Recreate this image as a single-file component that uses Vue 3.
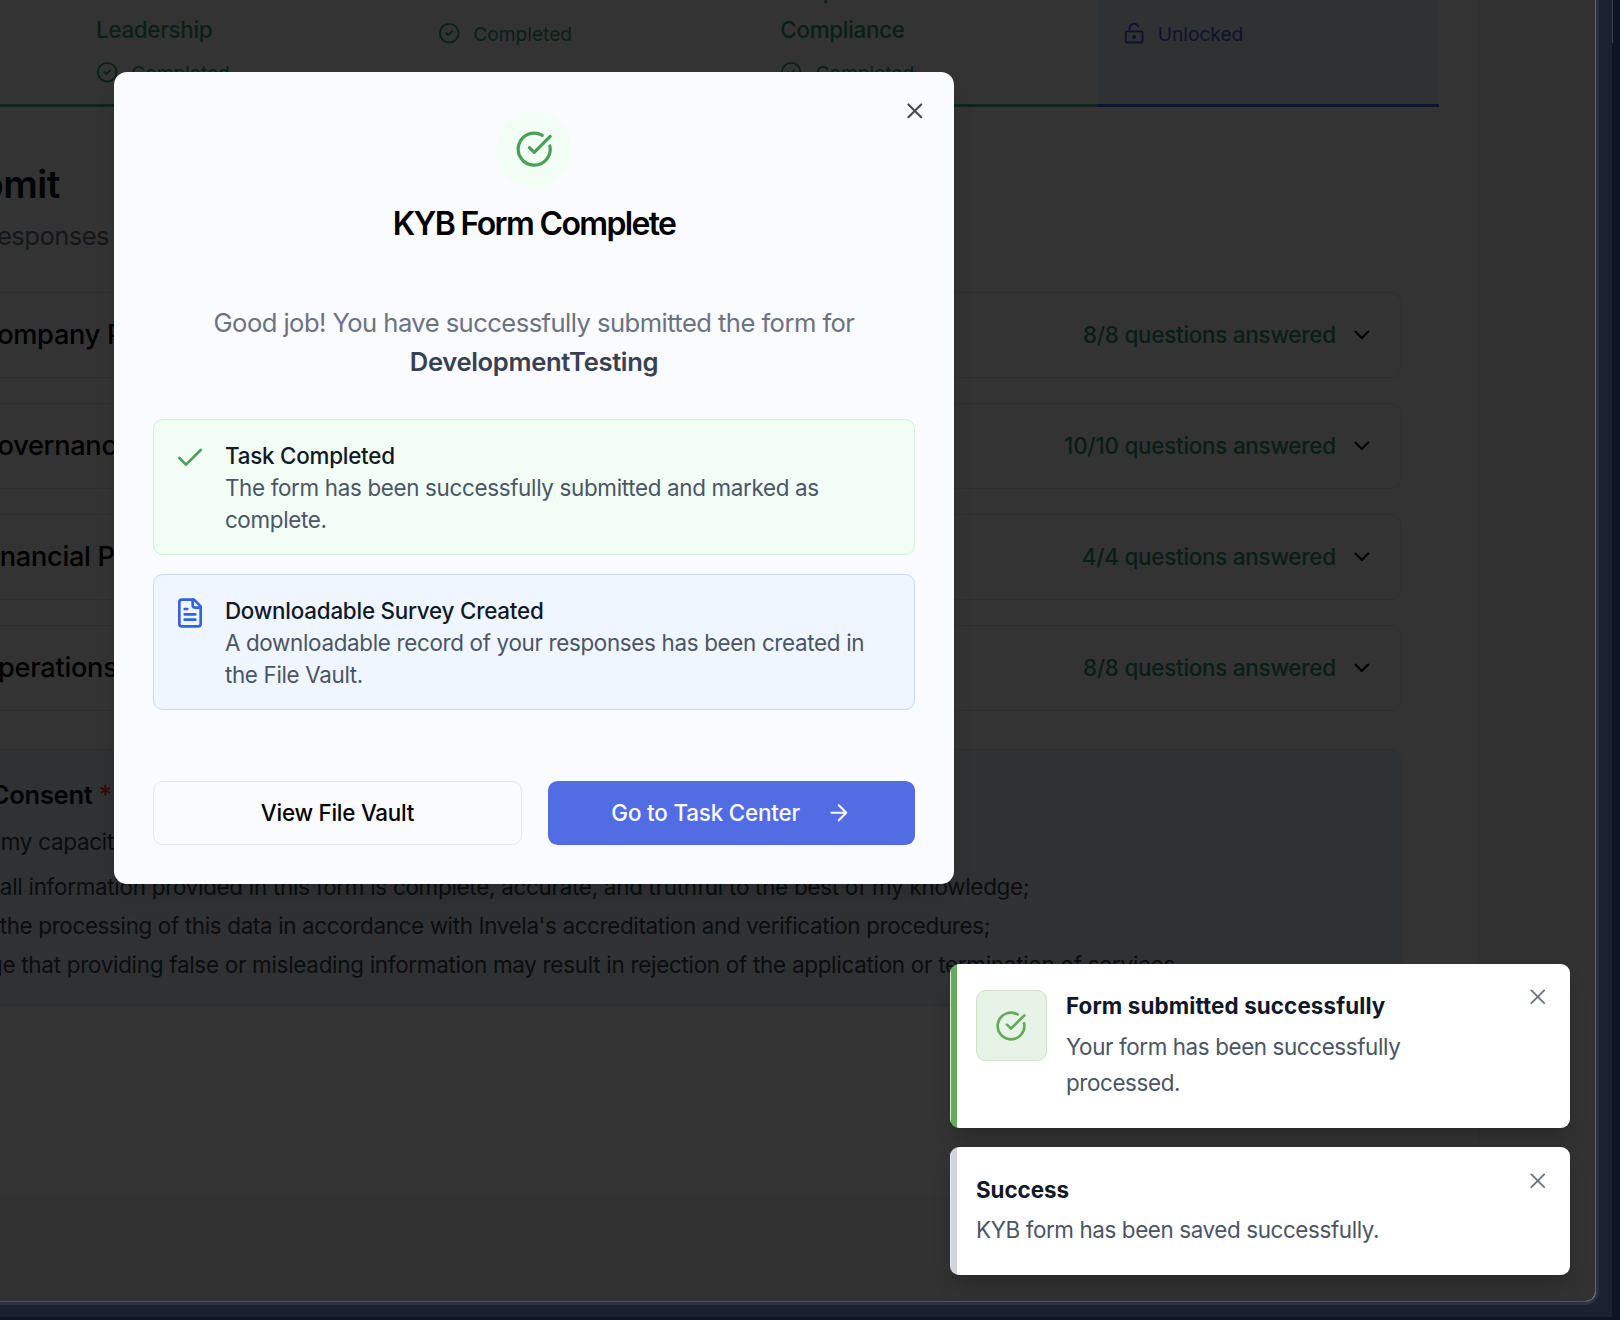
<script setup>
const tabs = [
  { name: ['2. Governance &', 'Leadership'], status: 'Completed', open: false },
  { name: ['3. Financial Profile'], status: 'Completed', open: false },
  { name: ['4. Operations &', 'Compliance'], status: 'Completed', open: false },
  { name: ['5. Review & Submit'], status: 'Unlocked', open: true },
]

const sections = [
  { title: 'Company Profile', answered: '8/8 questions answered' },
  { title: 'Governance & Leadership', answered: '10/10 questions answered' },
  { title: 'Financial Profile', answered: '4/4 questions answered' },
  { title: 'Operations & Compliance', answered: '8/8 questions answered' },
]
</script>

<template>
  <div class="desktop">
    <div class="backdrop">
      <div class="window">
        <div class="viewport">
          <main class="page">
            <nav class="tabs">
              <div class="tab tab-first"></div>
              <div v-for="t in tabs" :key="t.name[0]" class="tab" :class="{ active: t.open }">
                <div v-for="line in t.name" :key="line" class="tab-name">{{ line }}</div>
                <div class="tab-status">
                  <svg v-if="t.open" class="icon" viewBox="0 0 24 24">
                    <circle cx="12" cy="16" r="1" />
                    <rect width="18" height="12" x="3" y="10" rx="2" />
                    <path d="M7 10V7a5 5 0 0 1 9.33-2.5" />
                  </svg>
                  <svg v-else class="icon" viewBox="0 0 24 24">
                    <circle cx="12" cy="12" r="10" />
                    <path d="m9 12 2 2 4-4" />
                  </svg>
                  <span>{{ t.status }}</span>
                </div>
              </div>
            </nav>

            <h1 class="heading">Review &amp; Submit</h1>
            <p class="lead">Please review your responses</p>

            <div class="sections">
              <div v-for="s in sections" :key="s.title" class="section">
                <div class="section-title">{{ s.title }}</div>
                <div class="section-side">
                  <span>{{ s.answered }}</span>
                  <svg class="icon chevron" viewBox="0 0 24 24"><path d="m6 9 6 6 6-6" /></svg>
                </div>
              </div>
            </div>

            <div class="consent">
              <div class="consent-title">Submission Consent <span class="star">*</span></div>
              <p class="capacity">In my capacity as an authorized</p>
              <p class="line l1">I certify that all information provided in this form is complete, accurate, and truthful to the best of my knowledge;</p>
              <p class="line l2">I consent to the processing of this data in accordance with Invela's accreditation and verification procedures;</p>
              <p class="line l3">I acknowledge that providing false or misleading information may result in rejection of the application or termination of services.</p>
            </div>
          </main>
          <div class="overlay"></div>
        </div>
      </div>
    </div>
    <div class="edge-mark"></div>

    <div class="dialog" role="dialog">
      <button class="dialog-close" aria-label="Close">
        <svg class="icon" viewBox="0 0 24 24"><path d="M18 6 6 18M6 6l12 12" /></svg>
      </button>
      <div class="badge">
        <svg class="icon" viewBox="0 0 24 24">
          <path d="M21.801 10A10 10 0 1 1 17 3.335" />
          <path d="m9 11 3 3L22 4" />
        </svg>
      </div>
      <h2 class="dialog-title">KYB Form Complete</h2>
      <p class="dialog-text">
        <span class="good">Good job! You have successfully submitted the form for</span><br />
        <strong>DevelopmentTesting</strong>
      </p>

      <div class="note green">
        <svg class="icon" viewBox="0 0 24 24"><path d="M20 6 9 17l-5-5" /></svg>
        <div class="note-body">
          <div class="note-title">Task Completed</div>
          <div>The form has been successfully submitted and marked as<br />complete.</div>
        </div>
      </div>

      <div class="note blue">
        <svg class="icon" viewBox="0 0 24 24">
          <path d="M15 2H6a2 2 0 0 0-2 2v16a2 2 0 0 0 2 2h12a2 2 0 0 0 2-2V7Z" />
          <path d="M14 2v4a2 2 0 0 0 2 2h4" />
          <path d="M10 9H8M16 13H8M16 17H8" />
        </svg>
        <div class="note-body">
          <div class="note-title">Downloadable Survey Created</div>
          <div>A downloadable record of your responses has been created in<br />the File Vault.</div>
        </div>
      </div>

      <div class="actions">
        <button class="btn outline">View File Vault</button>
        <button class="btn primary">
          <span>Go to Task Center</span>
          <svg class="icon" viewBox="0 0 24 24"><path d="M5 12h14M12 5l7 7-7 7" /></svg>
        </button>
      </div>
    </div>

    <div class="toasts">
      <div class="toast success">
        <div class="toast-icon">
          <svg class="icon" viewBox="0 0 24 24">
            <path d="M21.801 10A10 10 0 1 1 17 3.335" />
            <path d="m9 11 3 3L22 4" />
          </svg>
        </div>
        <div class="toast-body">
          <div class="toast-title">Form submitted successfully</div>
          <div class="toast-text">Your form has been successfully<br />processed.</div>
        </div>
        <svg class="icon toast-close" viewBox="0 0 24 24"><path d="M18 6 6 18M6 6l12 12" /></svg>
      </div>
      <div class="toast plain">
        <div class="toast-body">
          <div class="toast-title">Success</div>
          <div class="toast-text">KYB form has been saved successfully.</div>
        </div>
        <svg class="icon toast-close" viewBox="0 0 24 24"><path d="M18 6 6 18M6 6l12 12" /></svg>
      </div>
    </div>
  </div>
</template>

<style>
body {
  margin: 0;
  background: #0d1424;
}
</style>

<style scoped>
* {
  box-sizing: border-box;
}
.desktop {
  position: relative;
  width: 1620px;
  height: 1320px;
  overflow: hidden;
  background: #0e1424;
  font-family: Inter, 'Liberation Sans', sans-serif;
  font-size: 22.4px;
  white-space: nowrap;
}
h1,
h2,
p {
  margin: 0;
}
button {
  font: inherit;
  letter-spacing: inherit;
  padding: 0;
  border: 0;
  background: none;
}
.icon {
  flex: none;
  display: block;
  fill: none;
  stroke: currentColor;
  stroke-width: 2;
  stroke-linecap: round;
  stroke-linejoin: round;
}
.backdrop {
  width: 1612px;
  height: 1317px;
  background: #1b2131;
}
.window {
  width: 1599px;
  height: 1305px;
  border-bottom-right-radius: 14px;
  background: #2b3047;
}
.viewport {
  position: relative;
  width: 1596px;
  height: 1302px;
  overflow: hidden;
  border-right: 1px solid #65666d;
  border-bottom: 1px solid #55565c;
  border-bottom-right-radius: 10px;
  background: #f7f7f7;
}
.overlay {
  position: absolute;
  inset: 0;
  background: rgba(0, 0, 0, 0.8);
}
.edge-mark {
  position: absolute;
  left: 1612px;
  top: 0;
  width: 1px;
  height: 43px;
  background: #3a4257;
}
.page {
  width: 1479px;
  height: 1199px;
  overflow: hidden;
  border-right: 1px solid #efefef;
  border-bottom: 1px solid #efefef;
  background: #fdfdfd;
}

.tabs {
  display: flex;
  height: 135.7px;
  margin-top: -28.7px;
}
.tab {
  width: 342.2px;
  padding: 0.9px 0 0 25.8px;
  border-bottom: 3px solid #54b08f;
  color: #2f9e75;
}
.tab-first {
  width: 70.2px;
  padding: 0;
}
.tab.active {
  background: #ecf2fa;
  border-color: #5564ea;
  color: #4c5ce6;
}
.tab-name {
  height: 38.4px;
  line-height: 38.4px;
  font-weight: 500;
  letter-spacing: -0.3px;
}
.tab-status {
  display: flex;
  align-items: center;
  gap: 12.8px;
  height: 22.4px;
  margin-top: 11.9px;
  font-size: 19.2px;
}
.tab-status span {
  padding-top: 1px;
  letter-spacing: -0.03px;
}
.tab-status .icon {
  width: 22.4px;
  height: 22.4px;
}
.tab.active .icon {
  margin: 0 -0.7px 0 0.7px;
}

.heading {
  margin: 53.4px 0 0 -241.5px;
  font-size: 38.4px;
  line-height: 48px;
  font-weight: 600;
  letter-spacing: -0.5px;
  color: #0f172a;
}
.lead {
  margin: 7.6px 0 0 -237px;
  font-size: 25.6px;
  line-height: 40px;
  letter-spacing: -0.55px;
  color: #6b7280;
}
.sections {
  display: flex;
  flex-direction: column;
  gap: 25.4px;
  width: 1401px;
  margin-top: 36px;
}
.section {
  display: flex;
  align-items: center;
  justify-content: space-between;
  height: 85.6px;
  padding-right: 25.8px;
  border: 1px solid #e7e7e9;
  border-left: 0;
  border-radius: 0 10px 10px 0;
}
.section-title {
  margin-left: -22.5px;
  font-size: 27.2px;
  font-weight: 500;
  letter-spacing: -0.3px;
  color: #000;
}
.section-side {
  display: flex;
  align-items: center;
  gap: 12.8px;
  font-weight: 500;
  letter-spacing: -0.235px;
  color: #2f9470;
}
.chevron {
  width: 25.6px;
  height: 25.6px;
  color: #000;
}
.consent {
  width: 1401px;
  height: 257px;
  margin-top: 38px;
  padding-top: 26px;
  overflow: hidden;
  border: 1px solid #e2e6ec;
  border-left: 0;
  border-radius: 0 10px 10px 0;
  background: #eff3f8;
  color: #374151;
}
.consent-title {
  margin-left: -156px;
  line-height: 38px;
  font-size: 25.6px;
  font-weight: 600;
  letter-spacing: -0.34px;
  color: #111827;
}
.star {
  color: #ef4444;
}
.capacity {
  margin: 9.6px 0 0 -24px;
  line-height: 38.5px;
  letter-spacing: -0.26px;
}
.line {
  line-height: 38.6px;
  letter-spacing: -0.265px;
}
.l1 {
  margin: 6.8px 0 0 -129.8px;
}
.l2 {
  margin-left: -126.2px;
  letter-spacing: -0.34px;
}
.l3 {
  margin-left: -134.8px;
}

.dialog {
  position: absolute;
  left: 114px;
  top: 72px;
  width: 840px;
  height: 812px;
  padding: 39px 39px 0;
  border-radius: 13px;
  background: #fafbff;
  box-shadow: 0 16px 24px -5px rgba(0, 0, 0, 0.12);
}
.dialog-close {
  position: absolute;
  top: 26.4px;
  right: 26.6px;
  color: #4a4b4f;
}
.dialog-close .icon {
  width: 25.6px;
  height: 25.6px;
}
.badge {
  display: flex;
  align-items: center;
  justify-content: center;
  width: 76.8px;
  height: 76.8px;
  margin: 0 auto;
  border-radius: 50%;
  background: #f1fdf5;
  color: #48a154;
}
.badge .icon {
  width: 38.4px;
  height: 38.4px;
}
.dialog-title {
  margin-top: 20.2px;
  text-align: center;
  font-size: 32px;
  line-height: 32px;
  font-weight: 600;
  letter-spacing: -1.65px;
  color: #000;
}
.dialog-text {
  margin-top: 63px;
  text-align: center;
  font-size: 25.6px;
  line-height: 39px;
  color: #6b7280;
}
.good {
  letter-spacing: -0.555px;
}
.dialog-text strong {
  font-weight: 600;
  letter-spacing: -0.34px;
  color: #374151;
}
.note {
  display: flex;
  height: 136px;
  padding: 19px 19.5px;
  border: 1px solid;
  border-radius: 9.6px;
}
.note .icon {
  width: 32px;
  height: 32px;
  margin-top: 3px;
}
.note-body {
  margin-left: 19.4px;
  padding-top: 0.6px;
  line-height: 32px;
  letter-spacing: -0.325px;
  color: #4b5563;
}
.note-title {
  font-weight: 500;
  letter-spacing: -0.225px;
  color: #111827;
}
.green {
  margin-top: 38px;
  border-color: #c8f4d5;
  background: #f2fdf5;
}
.green .icon {
  color: #48a154;
}
.blue {
  margin-top: 19px;
  border-color: #c3dafc;
  background: #eff6ff;
}
.blue .icon {
  color: #3562e5;
}
.actions {
  display: flex;
  gap: 26px;
  margin-top: 71px;
}
.btn {
  display: flex;
  align-items: center;
  justify-content: center;
  gap: 26px;
  height: 64px;
  border-radius: 9.6px;
  font-weight: 500;
  letter-spacing: -0.24px;
}
.outline {
  width: 369px;
  border: 1px solid #e4e7ec;
  color: #000;
}
.primary {
  width: 367px;
  background: #526ce4;
  color: #fafbff;
  letter-spacing: -0.17px;
}
.primary .icon {
  width: 25.6px;
  height: 25.6px;
}

.toasts {
  position: absolute;
  left: 950px;
  top: 964px;
  display: flex;
  flex-direction: column;
  gap: 19px;
  width: 620px;
}
.toast {
  position: relative;
  display: flex;
  gap: 19px;
  border-radius: 9px;
  box-shadow: 0 12px 20px -4px rgba(0, 0, 0, 0.22);
}
.success {
  height: 164px;
  padding: 26px 0 0 26px;
  background: linear-gradient(90deg, #dfe8df 1px, #66ad5b 1px, #66ad5b 7px, #fff 7px);
}
.plain {
  height: 128px;
  padding: 27.3px 0 0 26px;
  background: linear-gradient(90deg, #ebecee 1px, #d1d5db 1px, #d1d5db 7px, #fff 7px);
}
.toast-icon {
  display: flex;
  align-items: center;
  justify-content: center;
  width: 71px;
  height: 71px;
  padding-right: 1.4px;
  border: 1px solid #c9e5c8;
  border-radius: 9.6px;
  background: #e8f3e8;
  color: #62ab58;
}
.toast-icon .icon {
  width: 32px;
  height: 32px;
}
.toast-title {
  line-height: 32px;
  font-weight: 700;
  letter-spacing: -0.05px;
  color: #111827;
}
.success .toast-title {
  letter-spacing: 0.11px;
}
.toast-text {
  margin-top: 7px;
  line-height: 36.4px;
  letter-spacing: -0.385px;
  color: #4b5563;
}
.plain .toast-text {
  margin-top: 6px;
}
.toast-close {
  position: absolute;
  top: 19.8px;
  right: 19.8px;
  width: 25.6px;
  height: 25.6px;
  stroke-width: 1.7;
  color: #6b7280;
}
.plain .toast-close {
  top: 20.6px;
}
</style>
